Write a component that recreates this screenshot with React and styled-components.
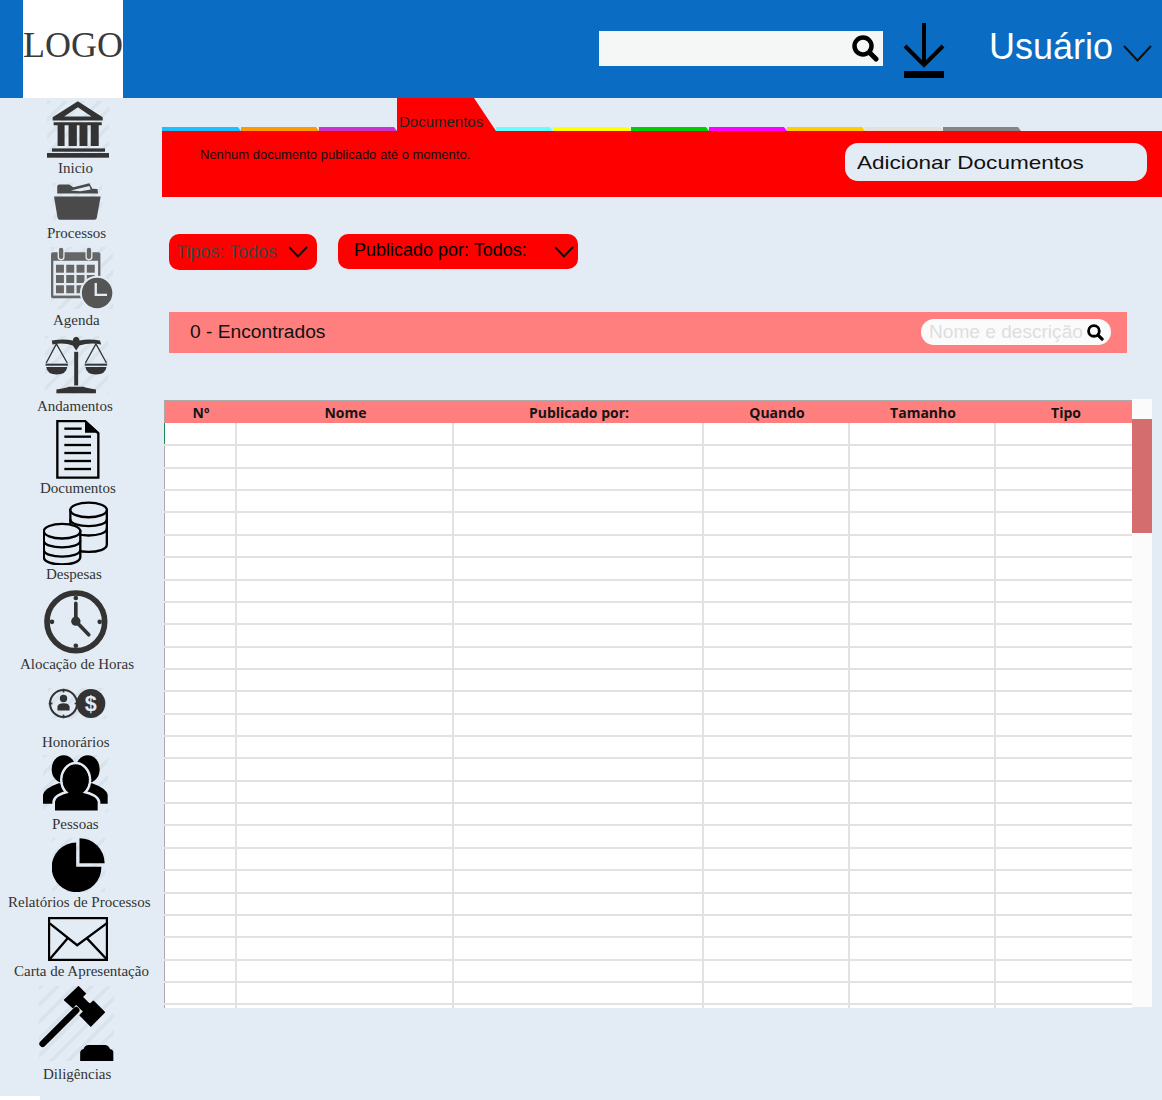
import React from "react";
import styled, { createGlobalStyle, css } from "styled-components";

const GlobalStyle = createGlobalStyle`
  html, body {
    margin: 0;
    padding: 0;
    background: #e3ecf4;
  }
  body {
    font-family: "Liberation Sans", Arial, sans-serif;
  }
`;

const Page = styled.div`
  width: 1162px;
  height: 1100px;
  overflow: hidden;
  display: flex;
  flex-direction: column;
`;

// Header
const Header = styled.header`
  height: 98px;
  flex: none;
  background: #0a6cc2;
  display: flex;
  align-items: flex-start;
  padding-left: 23px;
`;

const Logo = styled.div`
  width: 100px;
  height: 98px;
  background: #fff;
  color: #3a3a3a;
  font-family: "Liberation Serif", "Times New Roman", serif;
  font-size: 36px;
  line-height: 90px;
  text-align: center;
  white-space: nowrap;
`;

const TopSearch = styled.div`
  width: 284px;
  height: 35px;
  margin: 31px 0 0 476px;
  background: #f5f7f7;
  display: flex;
  justify-content: flex-end;
  align-items: center;
  padding-right: 4px;
  box-sizing: border-box;
`;

const DownloadButton = styled.div`
  width: 42px;
  height: 55px;
  margin: 23px 0 0 20px;
`;

const UserName = styled.div`
  margin: 26px 0 0 44px;
  color: #fff;
  font-size: 36px;
  line-height: 42px;
`;

const UserCaret = styled.div`
  margin: 45px 0 0 10px;
  line-height: 0;
`;

const Body = styled.div`
  flex: 1;
  display: flex;
  min-height: 0;
`;

// Sidebar
const Sidebar = styled.nav`
  width: 162px;
  flex: none;
  display: flex;
  flex-direction: column;
`;

const NavItem = styled.a`
  display: flex;
  flex-direction: column;
  align-items: flex-start;
  padding-top: ${(p) => p.$top}px;
  color: #333;
`;

const hatch = css`
  background: repeating-linear-gradient(
    135deg,
    rgba(196, 206, 216, 0.3) 0 3px,
    transparent 3px 12px
  );
`;

const NavIcon = styled.div`
  width: ${(p) => p.$w}px;
  height: ${(p) => p.$h}px;
  margin-left: ${(p) => p.$x}px;
  line-height: 0;
  ${(p) => p.$hatch && hatch}
  svg {
    display: block;
    width: 100%;
    height: 100%;
  }
`;

const NavLabel = styled.span`
  margin: ${(p) => p.$gap}px 0 0 ${(p) => p.$x}px;
  font-family: "Liberation Serif", "Times New Roman", serif;
  font-size: 15px;
  line-height: 16px;
  white-space: nowrap;
`;

const SidebarFoot = styled.div`
  width: 40px;
  height: 4px;
  margin-top: auto;
  background: #fff;
`;

// Main column
const Main = styled.main`
  flex: 1;
  min-width: 0;
  display: flex;
  flex-direction: column;
`;

const TabRow = styled.div`
  height: 33px;
  flex: none;
  display: flex;
  align-items: flex-end;
`;

const Tab = styled.div`
  width: ${(p) => p.$w}px;
  height: 4px;
  flex: none;
  background: ${(p) => p.$color};
  clip-path: polygon(0 0, calc(100% - 3px) 0, 100% 100%, 0 100%);
`;

const ActiveTab = styled.div`
  width: 99px;
  height: 33px;
  flex: none;
  box-sizing: border-box;
  padding: 15px 0 0 2px;
  background: #f00;
  color: #222;
  font-size: 15px;
  line-height: 17px;
  clip-path: polygon(0 0, 77px 0, 100% 100%, 0 100%);
`;

const RedPanel = styled.section`
  height: 66px;
  flex: none;
  box-sizing: border-box;
  background: #f00;
  display: flex;
  justify-content: space-between;
  align-items: flex-start;
  padding: 12px 15px 0 38px;
`;

const PanelText = styled.p`
  margin: 4px 0 0;
  color: #111;
  font-size: 13px;
  line-height: 16px;
`;

const AddButton = styled.button`
  width: 302px;
  height: 38px;
  box-sizing: border-box;
  border: 0;
  border-radius: 13px;
  padding: 2px 0 0 12px;
  background: #e3ecf4;
  color: #111;
  text-align: left;
  font-family: "Liberation Sans", Arial, sans-serif;
  font-size: 19px;
`;

const WideText = styled.span`
  display: inline-block;
  transform: scaleX(1.187);
  transform-origin: left center;
  white-space: nowrap;
`;

const Filters = styled.div`
  display: flex;
  align-items: flex-start;
  gap: 21px;
  margin: 37px 0 0 7px;
  height: 36px;
  flex: none;
`;

const FilterSelect = styled.div`
  width: ${(p) => p.$w}px;
  height: ${(p) => p.$h}px;
  box-sizing: border-box;
  border-radius: 10px;
  background: #f00;
  color: ${(p) => p.$color};
  display: flex;
  align-items: center;
  justify-content: space-between;
  padding: 0 ${(p) => p.$right}px 0 ${(p) => p.$left}px;
  font-size: 18px;
`;

const FilterText = styled.span`
  margin-top: ${(p) => p.$shift}px;
  white-space: nowrap;
`;

const FoundBar = styled.div`
  width: 958px;
  height: 41px;
  flex: none;
  box-sizing: border-box;
  margin: 42px 0 0 7px;
  padding: 0 16px 0 21px;
  background: #ff7f7f;
  display: flex;
  align-items: center;
  justify-content: space-between;
`;

const FoundCount = styled.span`
  margin-top: -2px;
  color: #111;
  font-size: 19.2px;
`;

const NameSearch = styled.div`
  width: 190px;
  height: 26px;
  box-sizing: border-box;
  margin-top: -1px;
  border-radius: 13px;
  background: #fbfbfb;
  padding: 0 7px 0 8px;
  display: flex;
  align-items: center;
  justify-content: space-between;
  color: #dedede;
  font-size: 19.1px;
  white-space: nowrap;
`;

// Table
const TableArea = styled.div`
  display: flex;
  align-items: flex-start;
  margin: 46px 0 0 2px;
`;

const Table = styled.div`
  width: 968px;
  height: 607px;
  margin-top: 1px;
  flex: none;
  overflow: hidden;
  background: #fff;
  border-top: 1px solid #aaa;
`;

const columns = css`
  display: grid;
  grid-template-columns: 73px 217px 250px 146px 146px 136px;
`;

const HeadRow = styled.div`
  ${columns}
  height: 22px;
  background: #ff7f7f;
`;

const HeadCell = styled.div`
  color: #151515;
  font-family: "Open Sans", "Noto Sans", sans-serif;
  font-size: 14px;
  font-weight: 700;
  line-height: 24px;
  text-align: center;
  white-space: nowrap;
  &:first-child {
    border-left: 1px solid #aaa;
  }
  &:last-child {
    padding-left: 4px;
  }
`;

const Row = styled.div`
  ${columns}
  height: ${(p) => (p.$first ? 23.36 : 22.36)}px;
  box-sizing: border-box;
  border-bottom: 2px solid #e2e2e2;
`;

const Cell = styled.div`
  box-sizing: border-box;
  border-right: ${(p) => (p.$last ? "0" : "2px solid #e2e2e2")};
  &:first-child {
    border-left: 1px solid ${(p) => (p.$active ? "#1f8a55" : "#aaa")};
  }
`;

const Scrollbar = styled.div`
  width: 20px;
  height: 608px;
  flex: none;
  background: #fbfbfb;
  padding-top: 20px;
  box-sizing: border-box;
`;

const ScrollThumb = styled.div`
  height: 114px;
  background: #d46e6e;
`;

// Icons
const Chevron = ({ w = 20, h = 12, sw = 2 }) => (
  <svg width={w} height={h} viewBox={`0 0 ${w} ${h}`} fill="none" stroke="#111" strokeWidth={sw}>
    <polyline points={`1,1 ${w / 2},${h - 1.5} ${w - 1},1`} />
  </svg>
);

const SearchIcon = ({ size = 27 }) => (
  <svg width={size} height={size} viewBox="0 0 27 27" fill="none" stroke="#000">
    <circle cx="11" cy="11" r="8.5" strokeWidth="4.5" />
    <line x1="17.5" y1="17.5" x2="24" y2="24" strokeWidth="5" strokeLinecap="round" />
  </svg>
);

const DownloadIcon = () => (
  <svg width="42" height="55" viewBox="0 0 42 55" fill="none" stroke="#000">
    <line x1="21" y1="0" x2="21" y2="41" strokeWidth="4" />
    <polyline points="2,23 21,42 40,23" strokeWidth="4" />
    <rect x="1" y="48" width="40" height="7" fill="#000" stroke="none" />
  </svg>
);

const BankIcon = () => (
  <svg viewBox="140 35 187 170" fill="#333">
    <path fillRule="evenodd" d="M233 35L308 83V93H157V83ZM233 53L192 81H274Z" />
    <path d="M160 98H305V107H296V170H272V107H262V170H238V107H230V170H205V107H193V170H172V107H160Z" />
    <rect x="155" y="177" width="160" height="10" />
    <rect x="140" y="191" width="187" height="14" />
  </svg>
);

const FolderIcon = () => (
  <svg viewBox="158 278 146 115" fill="#4a4a4a">
    <path d="M168 287Q170 283 176 283H205L218 291L268 279L277 296L293 297L295 311H168Z" />
    <path fill="#e3ecf4" d="M210 301L268 287L272 298L240 304Z" />
    <path d="M158 320H303L291 386Q290 392 284 392H176Q170 392 169 386Z" />
  </svg>
);

const CalendarIcon = () => (
  <svg viewBox="153 472 187 186">
    <rect x="153" y="487" width="149" height="139" rx="6" fill="#666" />
    <rect x="160" y="513" width="135" height="105" fill="#e3ecf4" />
    <rect x="175" y="472" width="17" height="38" rx="8" fill="#666" stroke="#e3ecf4" strokeWidth="4" />
    <rect x="259" y="472" width="17" height="38" rx="8" fill="#666" stroke="#e3ecf4" strokeWidth="4" />
    <g fill="#666">
      {[168, 199, 230, 261].map((x) =>
        [525, 556, 587].map((y) => <rect key={`${x}-${y}`} x={x} y={y} width="24" height="24" />)
      )}
    </g>
    <circle cx="292" cy="610" r="52" fill="#e3ecf4" />
    <circle cx="292" cy="610" r="46" fill="#555" />
    <polyline points="288,580 288,616 322,616" fill="none" stroke="#e3ecf4" strokeWidth="7" />
  </svg>
);

const ScalesIcon = () => (
  <svg viewBox="134 738 190 176" fill="#333" stroke="none">
    <path d="M228 740Q238 742 238 752Q265 745 300 752L304 764Q270 757 238 767L228 782L218 767Q190 757 156 764L154 752Q190 745 218 752Q218 742 228 740Z" />
    <rect x="222" y="786" width="12" height="102" />
    <path d="M205 892H251Q258 896 288 900V912H168V900Q198 896 205 892Z" />
    <g fill="none" stroke="#333" strokeWidth="4">
      <polyline points="137,820 168,762 201,820" />
      <polyline points="256,820 288,762 320,820" />
    </g>
    <rect x="135" y="822" width="68" height="6" />
    <rect x="254" y="822" width="68" height="6" />
    <path d="M137 832H201Q198 855 169 855Q140 855 137 832Z" />
    <path d="M256 832H320Q317 855 288 855Q259 855 256 832Z" />
  </svg>
);

const DocumentIcon = () => (
  <svg viewBox="168 0 132 177">
    <path d="M172 3H255L295 40V173H172Z" fill="none" stroke="#000" strokeWidth="7" />
    <path d="M255 0L298 38H255Z" fill="#000" />
    <g stroke="#000" strokeWidth="7">
      <line x1="193" y1="26" x2="245" y2="26" />
      {[50, 75, 99, 123, 147].map((y) => (
        <line key={y} x1="193" y1={y} x2="273" y2={y} />
      ))}
    </g>
  </svg>
);

const Coins = ({ cx, top, bottom }) => (
  <g fill="#e3ecf4" stroke="#000" strokeWidth="7">
    <path d={`M${cx - 55} ${top}V${bottom}C${cx - 55} ${bottom + 30} ${cx + 55} ${bottom + 30} ${cx + 55} ${bottom}V${top}Z`} />
    <ellipse cx={cx} cy={top} rx="55" ry="22" />
    <path fill="none" d={`M${cx - 55} ${top + 28}C${cx - 55} ${top + 56} ${cx + 55} ${top + 56} ${cx + 55} ${top + 28}`} />
    <path fill="none" d={`M${cx - 55} ${top + 56}C${cx - 55} ${top + 84} ${cx + 55} ${top + 84} ${cx + 55} ${top + 56}`} />
  </g>
);

const CoinsIcon = () => (
  <svg viewBox="128 243 195 193">
    <Coins cx={265} top={270} bottom={374} />
    <Coins cx={185} top={334} bottom={412} />
  </svg>
);

const ClockIcon = () => (
  <svg viewBox="133 510 191 193">
    <circle cx="228" cy="606" r="87" fill="none" stroke="#333" strokeWidth="17" />
    <g fill="#333">
      <circle cx="228" cy="534" r="7" />
      <circle cx="228" cy="678" r="7" />
      <circle cx="156" cy="606" r="7" />
      <circle cx="300" cy="606" r="7" />
      <circle cx="228" cy="604" r="14" />
    </g>
    <polyline points="228,550 228,604 267,645" fill="none" stroke="#333" strokeWidth="11" strokeLinecap="round" />
  </svg>
);

const HonorIcon = () => (
  <svg viewBox="145 803 172 92">
    <circle cx="191" cy="849" r="40" fill="none" stroke="#333" strokeWidth="6" />
    <g stroke="#333" strokeWidth="5">
      <line x1="191" y1="805" x2="191" y2="816" />
      <line x1="191" y1="882" x2="191" y2="893" />
      <line x1="147" y1="849" x2="158" y2="849" />
      <line x1="224" y1="849" x2="235" y2="849" />
    </g>
    <circle cx="191" cy="834" r="11" fill="#333" />
    <path d="M173 870V858Q175 848 191 848Q207 848 209 858V870Z" fill="#333" />
    <circle cx="272" cy="849" r="43" fill="#333" />
    <text x="272" y="872" textAnchor="middle" fill="#e3ecf4" fontFamily="Liberation Sans, sans-serif" fontWeight="700" fontSize="64">$</text>
  </svg>
);

const PeopleIcon = () => (
  <svg viewBox="128 16 195 170" fill="#000">
    <ellipse cx="190" cy="58" rx="36" ry="42" />
    <ellipse cx="262" cy="58" rx="36" ry="42" />
    <path d="M128 162V135Q132 115 175 100H275Q318 115 322 135V162Z" />
    <ellipse cx="226" cy="90" rx="43" ry="50" stroke="#e3ecf4" strokeWidth="8" />
    <path d="M160 186V155Q163 135 205 125H247Q292 135 296 155V186Z" stroke="#e3ecf4" strokeWidth="8" />
    <ellipse cx="226" cy="90" rx="39" ry="46" />
  </svg>
);

const PieIcon = () => (
  <svg viewBox="155 264 160 162" fill="#000">
    <path d="M228 277V350H304A75 75 0 1 1 228 277Z" />
    <path d="M238 264A76 76 0 0 1 314 340H238Z" />
  </svg>
);

const MailIcon = () => (
  <svg viewBox="145 501 179 131">
    <rect x="148" y="504" width="173" height="125" fill="none" stroke="#000" strokeWidth="7" />
    <g fill="none" stroke="#000" strokeWidth="7">
      <polyline points="150,520 232,585 320,520" />
      <line x1="150" y1="627" x2="205" y2="563" />
      <line x1="320" y1="627" x2="260" y2="563" />
    </g>
  </svg>
);

const GavelIcon = () => (
  <svg viewBox="116 706 226 226" fill="#000">
    <path d="M235 708L256 729L246 739L269 762L280 752L313 785L272 827L240 794L251 783L228 760L218 771L193 748Z" strokeLinejoin="round" stroke="#000" strokeWidth="4" />
    <line x1="127" y1="880" x2="228" y2="779" stroke="#000" strokeWidth="20" strokeLinecap="round" />
    <path d="M240 932V907Q241 898 250 896Q255 884 265 884H315Q325 884 330 896Q340 898 340 907V932Z" />
  </svg>
);

const navItems = [
  { label: "Inicio", Icon: BankIcon, top: 3, x: 47, w: 62, h: 57, gap: 2, lx: 58, hatch: true },
  { label: "Processos", Icon: FolderIcon, top: 7, x: 53, w: 49, h: 37, gap: 5, lx: 47, hatch: true },
  { label: "Agenda", Icon: CalendarIcon, top: 6, x: 51, w: 62, h: 62, gap: 3, lx: 53, hatch: true },
  { label: "Andamentos", Icon: ScalesIcon, top: 8, x: 45, w: 63, h: 58, gap: 4, lx: 37, hatch: true },
  { label: "Documentos", Icon: DocumentIcon, top: 6, x: 56, w: 44, h: 59, gap: 1, lx: 40 },
  { label: "Despesas", Icon: CoinsIcon, top: 5, x: 43, w: 65, h: 64, gap: 1, lx: 46 },
  { label: "Alocação de Horas", Icon: ClockIcon, top: 8, x: 44, w: 64, h: 64, gap: 2, lx: 20 },
  { label: "Honorários", Icon: HonorIcon, top: 16, x: 48, w: 58, h: 31, gap: 15, lx: 42, hatch: true },
  { label: "Pessoas", Icon: PeopleIcon, top: 5, x: 43, w: 65, h: 57, gap: 4, lx: 52, hatch: true },
  { label: "Relatórios de Processos", Icon: PieIcon, top: 6, x: 52, w: 53, h: 54, gap: 2, lx: 8, hatch: true },
  { label: "Carta de Apresentação", Icon: MailIcon, top: 7, x: 48, w: 60, h: 44, gap: 2, lx: 14 },
  { label: "Diligências", Icon: GavelIcon, top: 7, x: 39, w: 75, h: 75, gap: 5, lx: 43, hatch: true }
];

const tabsBefore = [
  { color: "#1cc0ff", w: 79 },
  { color: "#ff9900", w: 78 },
  { color: "#cc33cc", w: 78 }
];

const tabsAfter = [
  { color: "#66ffff", w: 57 },
  { color: "#ffff00", w: 78 },
  { color: "#00cc00", w: 78 },
  { color: "#ff00ff", w: 78 },
  { color: "#ffcc00", w: 78 },
  { color: "#e3e0d8", w: 78 },
  { color: "#858585", w: 78 }
];

const headings = ["Nº", "Nome", "Publicado por:", "Quando", "Tamanho", "Tipo"];
const rows = Array.from({ length: 27 }, (_, i) => i);

export default function App() {
  return (
    <Page>
      <GlobalStyle />
      <Header>
        <Logo>LOGO</Logo>
        <TopSearch>
          <SearchIcon />
        </TopSearch>
        <DownloadButton>
          <DownloadIcon />
        </DownloadButton>
        <UserName>Usuário</UserName>
        <UserCaret>
          <Chevron w={29} h={17} />
        </UserCaret>
      </Header>
      <Body>
        <Sidebar>
          {navItems.map(({ label, Icon, top, x, w, h, gap, lx, hatch: striped }) => (
            <NavItem key={label} $top={top}>
              <NavIcon $x={x} $w={w} $h={h} $hatch={striped}>
                <Icon />
              </NavIcon>
              <NavLabel $gap={gap} $x={lx}>
                {label}
              </NavLabel>
            </NavItem>
          ))}
          <SidebarFoot />
        </Sidebar>
        <Main>
          <TabRow>
            {tabsBefore.map((t) => (
              <Tab key={t.color} $color={t.color} $w={t.w} />
            ))}
            <ActiveTab>Documentos</ActiveTab>
            {tabsAfter.map((t) => (
              <Tab key={t.color} $color={t.color} $w={t.w} />
            ))}
          </TabRow>
          <RedPanel>
            <PanelText>Nenhum documento publicado até o momento.</PanelText>
            <AddButton>
              <WideText>Adicionar Documentos</WideText>
            </AddButton>
          </RedPanel>
          <Filters>
            <FilterSelect $w={148} $h={36} $left={7} $right={9} $color="#444">
              <FilterText $shift={1}>Tipos: Todos</FilterText>
              <Chevron />
            </FilterSelect>
            <FilterSelect $w={240} $h={35} $left={16} $right={4} $color="#000">
              <FilterText $shift={-2}>Publicado por: Todos:</FilterText>
              <Chevron />
            </FilterSelect>
          </Filters>
          <FoundBar>
            <FoundCount>0 - Encontrados</FoundCount>
            <NameSearch>
              Nome e descrição
              <SearchIcon size={17} />
            </NameSearch>
          </FoundBar>
          <TableArea>
            <Table>
              <HeadRow>
                {headings.map((h) => (
                  <HeadCell key={h}>{h}</HeadCell>
                ))}
              </HeadRow>
              {rows.map((r) => (
                <Row key={r} $first={r === 0}>
                  {headings.map((h, i) => (
                    <Cell key={h} $active={r === 0 && i === 0} $last={i === 5} />
                  ))}
                </Row>
              ))}
            </Table>
            <Scrollbar>
              <ScrollThumb />
            </Scrollbar>
          </TableArea>
        </Main>
      </Body>
    </Page>
  );
}
